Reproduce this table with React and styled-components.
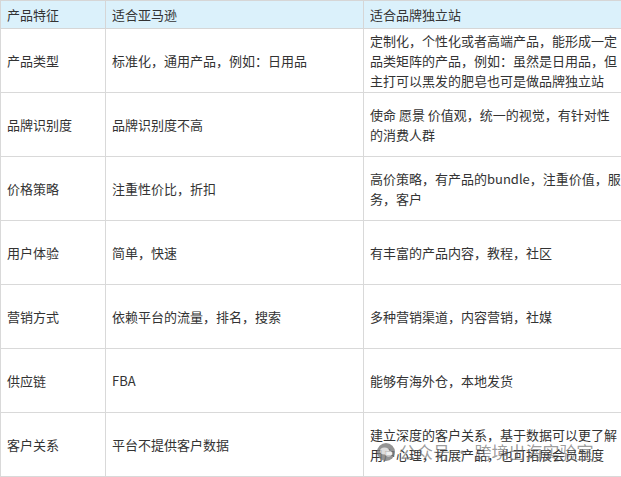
import React from 'react';
import styled, { createGlobalStyle } from 'styled-components';

const GlobalStyle = createGlobalStyle`
  html, body {
    margin: 0;
    padding: 0;
    background: #ffffff;
  }
  body {
    font-family: "Noto Sans CJK SC", "Noto Sans", sans-serif;
    overflow: hidden;
  }
`;

const rows = [
    ['产品类型', '标准化，通用产品，例如：日用品', '定制化，个性化或者高端产品，能形成一定品类矩阵的产品，例如：虽然是日用品，但主打可以黑发的肥皂也可是做品牌独立站'],
    ['品牌识别度', '品牌识别度不高', '使命 愿景 价值观，统一的视觉，有针对性的消费人群'],
    ['价格策略', '注重性价比，折扣', '高价策略，有产品的bundle，注重价值，服务，客户'],
    ['用户体验', '简单，快速', '有丰富的产品内容，教程，社区'],
    ['营销方式', '依赖平台的流量，排名，搜索', '多种营销渠道，内容营销，社媒'],
    ['供应链', 'FBA', '能够有海外仓，本地发货'],
    ['客户关系', '平台不提供客户数据', '建立深度的客户关系，基于数据可以更了解用户心理，拓展产品，也可拓展会员制度'],
];

const App = () => {
    return (
        <>
            <GlobalStyle />
            <Wrap>
                <Table>
                    <colgroup>
                        <col style={{ width: '105px' }} />
                        <col style={{ width: '258px' }} />
                        <col style={{ width: '265px' }} />
                    </colgroup>
                    <thead>
                        <tr>
                            <Th>产品特征</Th>
                            <Th>适合亚马逊</Th>
                            <Th>适合品牌独立站</Th>
                        </tr>
                    </thead>
                    <tbody>
                        {rows.map((r, i) => (
                            <tr key={i}>
                                <Td>{r[0]}</Td>
                                <Td>{r[1]}</Td>
                                <Td $last={i === rows.length - 1}>
                                    {r[2]}
                                    {i === rows.length - 1 && (
                                        <Watermark>
                                            <WmIcon viewBox="0 0 20 20">
                                                <circle cx="10" cy="10" r="9" fill="#7a7a7a" />
                                                <ellipse cx="8.5" cy="9" rx="4.5" ry="3.6" fill="#d6d6d6" />
                                                <ellipse cx="12.5" cy="11.5" rx="3.6" ry="2.9" fill="#ededed" />
                                            </WmIcon>
                                            <span>公众号 · 跨境出海实验室</span>
                                        </Watermark>
                                    )}
                                </Td>
                            </tr>
                        ))}
                    </tbody>
                </Table>
            </Wrap>
        </>
    );
};

const Wrap = styled.div`
  width: 621px;
  height: 477px;
  overflow: hidden;
`;

const Table = styled.table`
  width: 628px;
  table-layout: fixed;
  border-collapse: collapse;
  color: #333333;
  font-size: 13px;
  line-height: 20px;
`;

const Th = styled.th`
  height: 27px;
  padding: 0 6px;
  background: #dbf1fb;
  border: 1px solid #d6d6d6;
  font-weight: 400;
  text-align: left;
  vertical-align: middle;
  white-space: nowrap;
`;

const Td = styled.td`
  position: ${(p) => (p.$last ? 'relative' : 'static')};
  height: 63px;
  padding: 0 6px;
  border: 1px solid #d9d9d9;
  text-align: left;
  vertical-align: middle;
  word-break: break-all;
`;

const Watermark = styled.div`
  position: absolute;
  left: 12px;
  top: 29px;
  display: flex;
  align-items: center;
  gap: 3px;
  color: rgba(100, 100, 100, 0.65);
  font-size: 17px;
  white-space: nowrap;
  pointer-events: none;
`;

const WmIcon = styled.svg`
  width: 20px;
  height: 20px;
  opacity: 0.8;
`;

export default App;
